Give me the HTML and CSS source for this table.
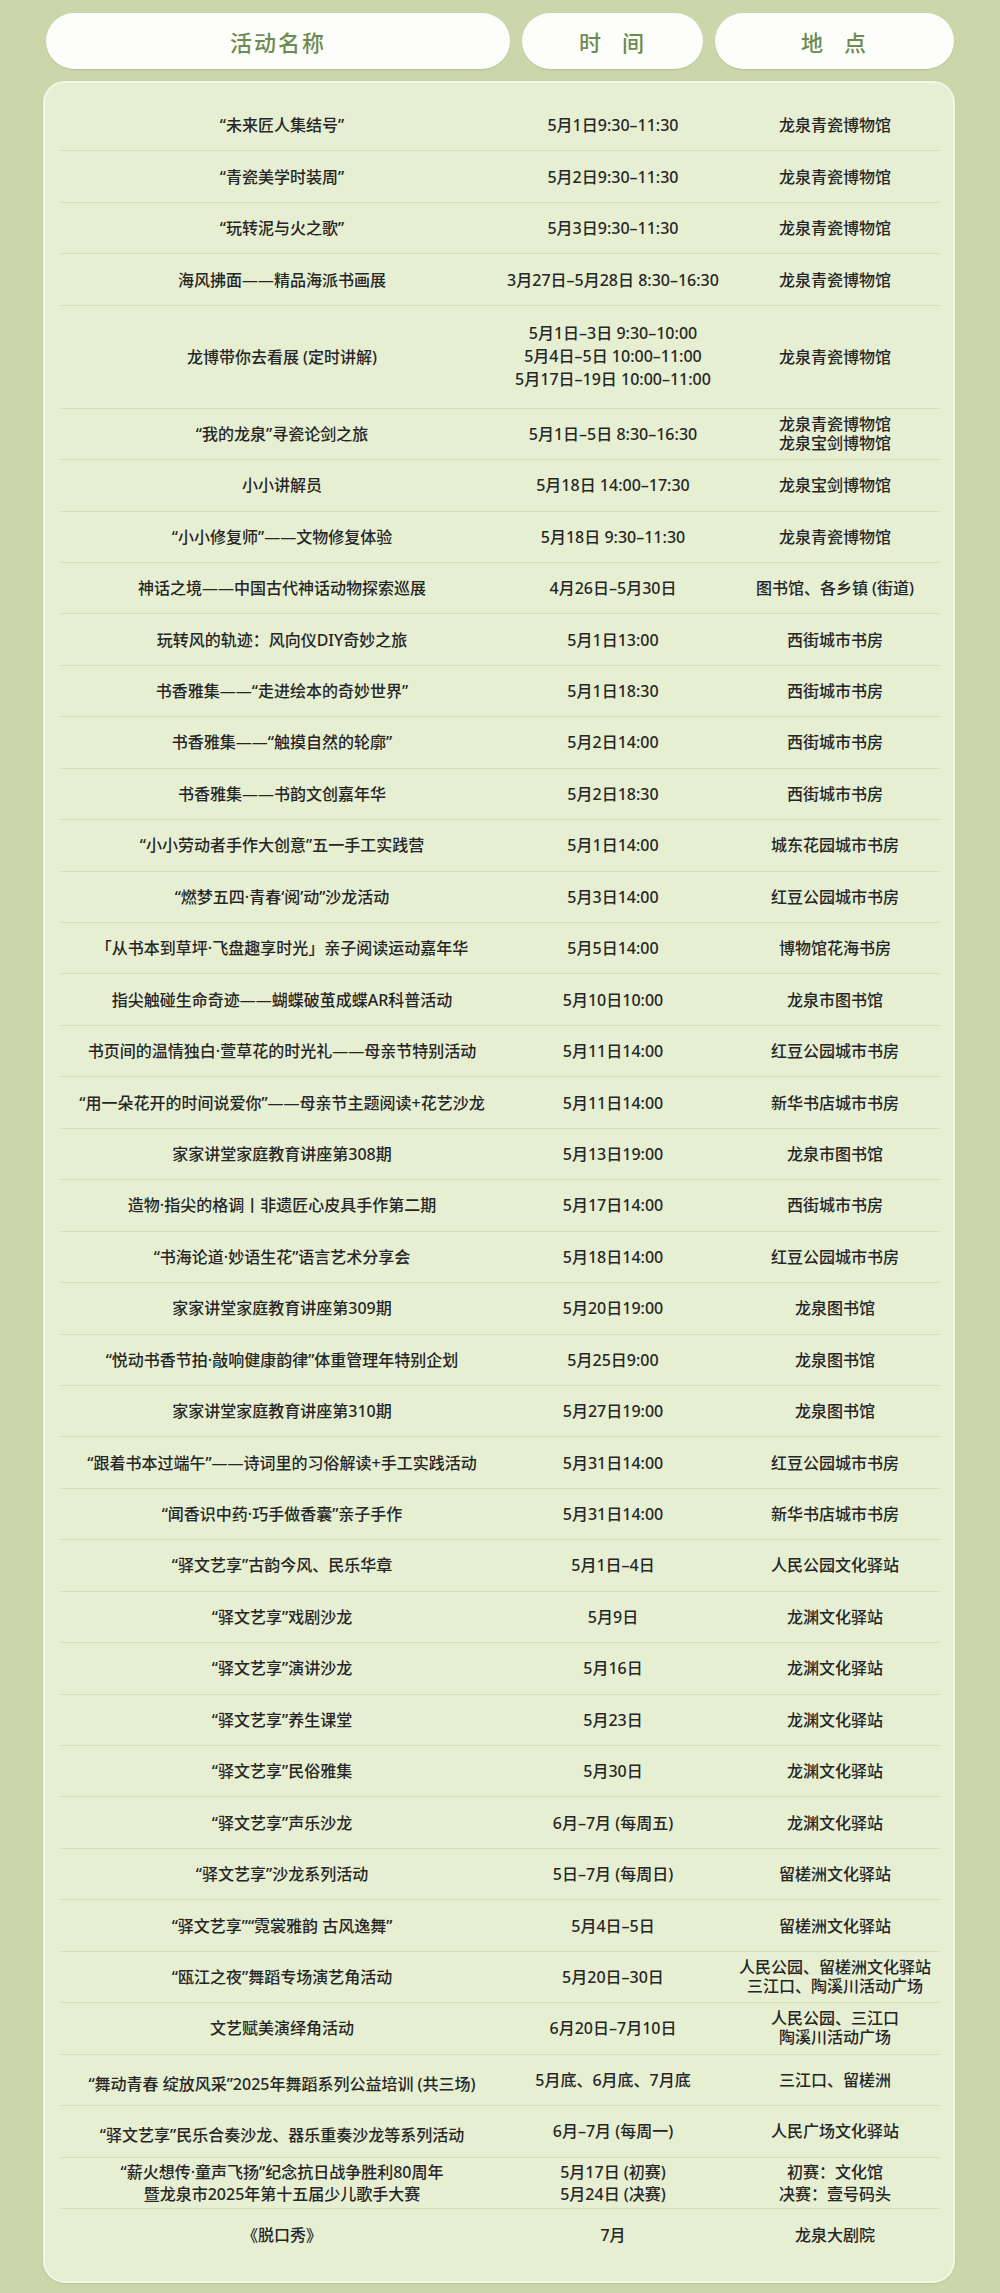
FILE: index.html
```html
<!DOCTYPE html>
<html lang="zh-CN">
<head>
<meta charset="utf-8">
<title>活动安排</title>
<link rel="stylesheet" href="styles.css">
</head>
<body>
<div class="page">
  <div class="head">
    <div class="pill pill-name">活动名称</div>
    <div class="pill pill-time">时 间</div>
    <div class="pill pill-place">地 点</div>
  </div>
  <div class="panel">
    <div class="row"><div class="c-name">“未来匠人集结号”</div><div class="c-time">5月1日9:30–11:30</div><div class="c-place">龙泉青瓷博物馆</div></div>
    <div class="row"><div class="c-name">“青瓷美学时装周”</div><div class="c-time">5月2日9:30–11:30</div><div class="c-place">龙泉青瓷博物馆</div></div>
    <div class="row"><div class="c-name">“玩转泥与火之歌”</div><div class="c-time">5月3日9:30–11:30</div><div class="c-place">龙泉青瓷博物馆</div></div>
    <div class="row"><div class="c-name">海风拂面——精品海派书画展</div><div class="c-time">3月27日–5月28日 8:30–16:30</div><div class="c-place">龙泉青瓷博物馆</div></div>
    <div class="row tall"><div class="c-name">龙博带你去看展 (定时讲解)</div><div class="c-time multi3">5月1日–3日 9:30–10:00<br>5月4日–5日 10:00–11:00<br>5月17日–19日 10:00–11:00</div><div class="c-place">龙泉青瓷博物馆</div></div>
    <div class="row"><div class="c-name">“我的龙泉”寻瓷论剑之旅</div><div class="c-time">5月1日–5日 8:30–16:30</div><div class="c-place multi2">龙泉青瓷博物馆<br>龙泉宝剑博物馆</div></div>
    <div class="row"><div class="c-name">小小讲解员</div><div class="c-time">5月18日 14:00–17:30</div><div class="c-place">龙泉宝剑博物馆</div></div>
    <div class="row"><div class="c-name">“小小修复师”——文物修复体验</div><div class="c-time">5月18日 9:30–11:30</div><div class="c-place">龙泉青瓷博物馆</div></div>
    <div class="row"><div class="c-name">神话之境——中国古代神话动物探索巡展</div><div class="c-time">4月26日–5月30日</div><div class="c-place">图书馆、各乡镇 (街道)</div></div>
    <div class="row"><div class="c-name">玩转风的轨迹：风向仪DIY奇妙之旅</div><div class="c-time">5月1日13:00</div><div class="c-place">西街城市书房</div></div>
    <div class="row"><div class="c-name">书香雅集——“走进绘本的奇妙世界”</div><div class="c-time">5月1日18:30</div><div class="c-place">西街城市书房</div></div>
    <div class="row"><div class="c-name">书香雅集——“触摸自然的轮廓”</div><div class="c-time">5月2日14:00</div><div class="c-place">西街城市书房</div></div>
    <div class="row"><div class="c-name">书香雅集——书韵文创嘉年华</div><div class="c-time">5月2日18:30</div><div class="c-place">西街城市书房</div></div>
    <div class="row"><div class="c-name">“小小劳动者手作大创意”五一手工实践营</div><div class="c-time">5月1日14:00</div><div class="c-place">城东花园城市书房</div></div>
    <div class="row"><div class="c-name">“燃梦五四·青春‘阅’动”沙龙活动</div><div class="c-time">5月3日14:00</div><div class="c-place">红豆公园城市书房</div></div>
    <div class="row"><div class="c-name">「从书本到草坪·飞盘趣享时光」亲子阅读运动嘉年华</div><div class="c-time">5月5日14:00</div><div class="c-place">博物馆花海书房</div></div>
    <div class="row"><div class="c-name">指尖触碰生命奇迹——蝴蝶破茧成蝶AR科普活动</div><div class="c-time">5月10日10:00</div><div class="c-place">龙泉市图书馆</div></div>
    <div class="row"><div class="c-name">书页间的温情独白·萱草花的时光礼——母亲节特别活动</div><div class="c-time">5月11日14:00</div><div class="c-place">红豆公园城市书房</div></div>
    <div class="row"><div class="c-name">“用一朵花开的时间说爱你”——母亲节主题阅读+花艺沙龙</div><div class="c-time">5月11日14:00</div><div class="c-place">新华书店城市书房</div></div>
    <div class="row"><div class="c-name">家家讲堂家庭教育讲座第308期</div><div class="c-time">5月13日19:00</div><div class="c-place">龙泉市图书馆</div></div>
    <div class="row"><div class="c-name">造物·指尖的格调丨非遗匠心皮具手作第二期</div><div class="c-time">5月17日14:00</div><div class="c-place">西街城市书房</div></div>
    <div class="row"><div class="c-name">“书海论道·妙语生花”语言艺术分享会</div><div class="c-time">5月18日14:00</div><div class="c-place">红豆公园城市书房</div></div>
    <div class="row"><div class="c-name">家家讲堂家庭教育讲座第309期</div><div class="c-time">5月20日19:00</div><div class="c-place">龙泉图书馆</div></div>
    <div class="row"><div class="c-name">“悦动书香节拍·敲响健康韵律”体重管理年特别企划</div><div class="c-time">5月25日9:00</div><div class="c-place">龙泉图书馆</div></div>
    <div class="row"><div class="c-name">家家讲堂家庭教育讲座第310期</div><div class="c-time">5月27日19:00</div><div class="c-place">龙泉图书馆</div></div>
    <div class="row"><div class="c-name">“跟着书本过端午”——诗词里的习俗解读+手工实践活动</div><div class="c-time">5月31日14:00</div><div class="c-place">红豆公园城市书房</div></div>
    <div class="row"><div class="c-name">“闻香识中药·巧手做香囊”亲子手作</div><div class="c-time">5月31日14:00</div><div class="c-place">新华书店城市书房</div></div>
    <div class="row"><div class="c-name">“驿文艺享”古韵今风、民乐华章</div><div class="c-time">5月1日–4日</div><div class="c-place">人民公园文化驿站</div></div>
    <div class="row"><div class="c-name">“驿文艺享”戏剧沙龙</div><div class="c-time">5月9日</div><div class="c-place">龙渊文化驿站</div></div>
    <div class="row"><div class="c-name">“驿文艺享”演讲沙龙</div><div class="c-time">5月16日</div><div class="c-place">龙渊文化驿站</div></div>
    <div class="row"><div class="c-name">“驿文艺享”养生课堂</div><div class="c-time">5月23日</div><div class="c-place">龙渊文化驿站</div></div>
    <div class="row"><div class="c-name">“驿文艺享”民俗雅集</div><div class="c-time">5月30日</div><div class="c-place">龙渊文化驿站</div></div>
    <div class="row"><div class="c-name">“驿文艺享”声乐沙龙</div><div class="c-time">6月–7月 (每周五)</div><div class="c-place">龙渊文化驿站</div></div>
    <div class="row"><div class="c-name">“驿文艺享”沙龙系列活动</div><div class="c-time">5日–7月 (每周日)</div><div class="c-place">留槎洲文化驿站</div></div>
    <div class="row"><div class="c-name">“驿文艺享”“霓裳雅韵 古风逸舞”</div><div class="c-time">5月4日–5日</div><div class="c-place">留槎洲文化驿站</div></div>
    <div class="row"><div class="c-name">“瓯江之夜”舞蹈专场演艺角活动</div><div class="c-time">5月20日–30日</div><div class="c-place multi2">人民公园、留槎洲文化驿站<br>三江口、陶溪川活动广场</div></div>
    <div class="row"><div class="c-name">文艺赋美演绎角活动</div><div class="c-time">6月20日–7月10日</div><div class="c-place multi2">人民公园、三江口<br>陶溪川活动广场</div></div>
    <div class="row"><div class="c-name low">“舞动青春 绽放风采”2025年舞蹈系列公益培训 (共三场)</div><div class="c-time">5月底、6月底、7月底</div><div class="c-place">三江口、留槎洲</div></div>
    <div class="row"><div class="c-name low">“驿文艺享”民乐合奏沙龙、器乐重奏沙龙等系列活动</div><div class="c-time">6月–7月 (每周一)</div><div class="c-place">人民广场文化驿站</div></div>
    <div class="row"><div class="c-name multi2n">“薪火想传·童声飞扬”纪念抗日战争胜利80周年<br>暨龙泉市2025年第十五届少儿歌手大赛</div><div class="c-time multi2n">5月17日 (初赛)<br>5月24日 (决赛)</div><div class="c-place multi2n">初赛：文化馆<br>决赛：壹号码头</div></div>
    <div class="row last"><div class="c-name">《脱口秀》</div><div class="c-time">7月</div><div class="c-place">龙泉大剧院</div></div>
  </div>
</div>
</body>
</html>
```

FILE: styles.css
```css
* { box-sizing: border-box; }
html, body { margin: 0; padding: 0; }
body {
  background: #cbd6ab;
  font-family: "Noto Sans", "Noto Sans CJK SC", sans-serif;
  color: #262626;
}
.page {
  width: 1000px;
  height: 2293px;
  padding-top: 13px;
  overflow: hidden;
}
.head {
  display: flex;
  gap: 12px;
  margin-left: 46px;
}
.pill {
  height: 56px;
  border-radius: 28px;
  background: #fdfefb;
  box-shadow: 0 1px 1px rgba(120, 140, 90, 0.25);
  display: flex;
  align-items: center;
  justify-content: center;
  color: #6e8b51;
  font-family: "Noto Sans CJK SC", sans-serif;
  font-size: 22px;
  font-weight: 500;
  letter-spacing: 2px;
}
.pill-name { width: 464px; }
.pill-time { width: 181px; word-spacing: 12px; }
.pill-place { width: 239px; word-spacing: 12px; }
.panel {
  margin: 12px 0 0 43px;
  width: 912px;
  background: #e7efd2;
  border: 2px solid #f2f7e6;
  border-radius: 22px;
  padding: 17px 13px 21px 15px;
  box-shadow: 0 1px 2px rgba(110, 130, 80, 0.2);
}
.row {
  display: grid;
  grid-template-columns: 444px 218px 218px;
  align-items: center;
  height: 51.45px;
  border-bottom: 1px solid #d2ddb9;
  font-size: 16px;
  font-weight: 500;
  text-align: center;
  line-height: 20px;
}
.row.tall { height: 102.9px; }
.row.last { border-bottom: none; }
.c-place { padding-left: 8px; }
.low { padding-top: 8px; }
.multi3 { line-height: 23px; }
.multi2 { line-height: 19px; }
.multi2n { line-height: 22px; }
```
